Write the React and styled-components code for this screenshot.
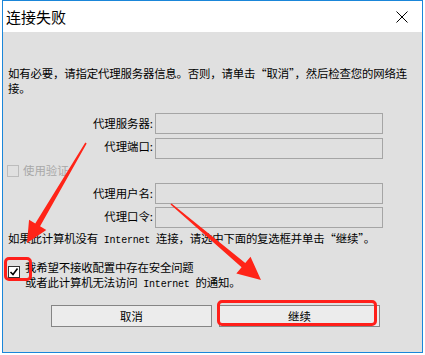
import React from 'react'
import styled, { createGlobalStyle } from 'styled-components'

const GlobalStyle = createGlobalStyle`
  body {
    margin: 0;
    background: #fff;
    font-family: 'Noto Sans CJK SC', 'Noto Sans', sans-serif;
  }
`

const Window = styled.div`
  position: relative;
  margin-left: 2px;
  width: 421px;
  height: 353px;
  box-sizing: border-box;
  border: 1px solid #1a86d9;
  background: #e0e0e0;
  display: flex;
  flex-direction: column;
`

const TitleBar = styled.div`
  height: 31px;
  background: #fff;
  display: flex;
  align-items: center;
  justify-content: space-between;
  padding: 0 14px 0 3px;
`

const Title = styled.div`
  font-size: 15px;
  color: #000;
  line-height: 1;
`

const CloseBtn = styled.div`
  width: 12px;
  height: 12px;
  display: flex;
`

const Body = styled.div`
  flex: 1;
  padding: 34px 0 0 5px;
  font-size: 11.4px;
  line-height: 15px;
  color: #000;
  display: flex;
  flex-direction: column;
`

const Para = styled.p`
  margin: 0;
  width: 410px;
  letter-spacing: -0.15px;
  margin-top: ${({ $top }) => $top || 0}px;
`

const Mono = styled.span`
  font-family: 'Liberation Mono', monospace;
  font-size: 10px;
  letter-spacing: -0.2px;
`

const Fields = styled.div`
  display: grid;
  grid-template-columns: 145px 228px;
  column-gap: 2px;
  align-items: center;
  margin-top: 17px;
`

const Label = styled.label`
  justify-self: end;
  white-space: nowrap;
`

const Box = styled.div`
  height: 21px;
  box-sizing: border-box;
  border: 1px solid #a5a5a5;
  background: #e0e0e0;
  margin-top: ${({ $top }) => $top || 0}px;
`

const CheckRow = styled.div`
  grid-column: 1 / 3;
  display: flex;
  align-items: ${({ $align }) => $align || 'center'};
  gap: ${({ $gap }) => $gap || 4}px;
  color: ${({ $disabled }) => ($disabled ? '#a8a8a8' : '#000')};
  margin: ${({ $margin }) => $margin || '0'};
  position: relative;
`

const Check = styled.span`
  width: 12px;
  height: 12px;
  flex: none;
  box-sizing: border-box;
  border: 1px solid ${({ $disabled }) => ($disabled ? '#bcbcbc' : '#333')};
  background: ${({ $disabled }) => ($disabled ? '#e0e0e0' : '#fff')};
  display: flex;
  align-items: center;
  justify-content: center;
  margin-top: ${({ $top }) => $top || 0}px;
`

const Lines = styled.div`
  display: flex;
  flex-direction: column;
  letter-spacing: -0.15px;
`

const Buttons = styled.div`
  display: flex;
  gap: 7px;
  margin: 13px 0 0 43px;
`

const Button = styled.div`
  position: relative;
  width: 161px;
  height: 22px;
  box-sizing: border-box;
  border: 1px solid #858585;
  background: #ececec;
  display: flex;
  align-items: center;
  justify-content: center;
`

const Highlight = styled.div`
  position: absolute;
  left: ${({ $l }) => $l}px;
  top: ${({ $t }) => $t}px;
  width: ${({ $w }) => $w}px;
  height: ${({ $h }) => $h}px;
  border: 3px solid #ff1f1a;
  border-radius: 5px;
  box-sizing: border-box;
  pointer-events: none;
`

const Arrows = styled.svg`
  position: absolute;
  left: -3px;
  top: -1px;
  pointer-events: none;
`

function Arrow({ x1, y1, x2, y2, head = 21, half = 10, w0 = 1, w1 = 3 }) {
  const dx = x2 - x1
  const dy = y2 - y1
  const len = Math.hypot(dx, dy)
  const ux = dx / len
  const uy = dy / len
  const nx = -uy
  const ny = ux
  const bx = x2 - ux * head
  const by = y2 - uy * head
  const pts = [
    [x1 + nx * w0, y1 + ny * w0],
    [bx + nx * w1, by + ny * w1],
    [bx + nx * half, by + ny * half],
    [x2, y2],
    [bx - nx * half, by - ny * half],
    [bx - nx * w1, by - ny * w1],
    [x1 - nx * w0, y1 - ny * w0],
  ]
  return <polygon points={pts.map(p => p.join(',')).join(' ')} fill="#ff2418" />
}

export default function App() {
  return (
    <>
      <GlobalStyle />
      <Window>
        <TitleBar>
          <Title>连接失败</Title>
          <CloseBtn>
            <svg width="12" height="12" viewBox="0 0 12 12">
              <path d="M0.5 0.5L11.5 11.5M11.5 0.5L0.5 11.5" stroke="#000" strokeWidth="1" />
            </svg>
          </CloseBtn>
        </TitleBar>
        <Body>
          <Para>如有必要，请指定代理服务器信息。否则，请单击“取消”，然后检查您的网络连接。</Para>
          <Fields>
            <Label>代理服务器:</Label>
            <Box />
            <Label>代理端口:</Label>
            <Box $top={4} />
            <CheckRow $disabled $margin="4px 0 5px -1px">
              <Check $disabled />
              使用验证
            </CheckRow>
            <Label>代理用户名:</Label>
            <Box />
            <Label>代理口令:</Label>
            <Box $top={3} />
          </Fields>
          <Para $top={3}>
            如果此计算机没有<Mono> Internet </Mono>连接，请选中下面的复选框并单击“继续”。
          </Para>
          <CheckRow $align="flex-start" $gap={5} $margin="12px 0 0 0">
            <Check $top={6}>
              <svg width="10" height="10" viewBox="0 0 10 10">
                <path d="M1.5 5L4 7.5L8.5 1.5" stroke="#000" strokeWidth="1.6" fill="none" />
              </svg>
            </Check>
            <Lines>
              <span>我希望不接收配置中存在安全问题</span>
              <span>或者此计算机无法访问<Mono> Internet </Mono>的通知。</span>
            </Lines>
            <Highlight $l={-4} $t={-3} $w={28} $h={24} />
          </CheckRow>
          <Buttons>
            <Button>取消</Button>
            <Button>
              继续
              <Highlight $l={-3} $t={-6} $w={160} $h={26} />
            </Button>
          </Buttons>
        </Body>
        <Arrows width="425" height="355" viewBox="0 0 425 355">
          <Arrow x1={86} y1={143} x2={27} y2={243} head={21} half={10} w0={0.8} w1={2.8} />
          <Arrow x1={171} y1={204} x2={261} y2={280} head={23} half={11} w0={0.8} w1={2.8} />
        </Arrows>
      </Window>
    </>
  )
}
